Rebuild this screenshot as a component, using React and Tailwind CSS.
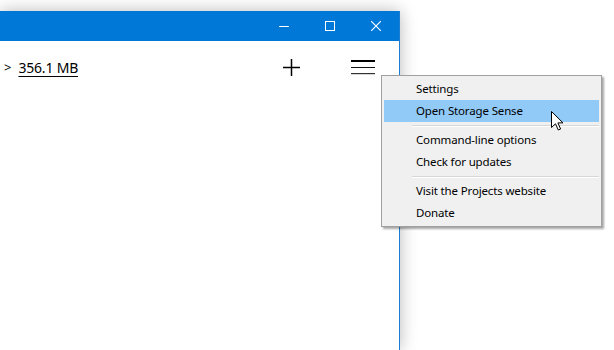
import React from 'react';

const menuGroups = [
    ['Settings', 'Open Storage Sense'],
    ['Command-line options', 'Check for updates'],
    ['Visit the Projects website', 'Donate'],
];

const Cursor = () => (
    <svg width="13" height="20" viewBox="0 0 13 20" className="absolute left-[551px] top-[111px]">
        <path
            d="M0.5 0.5 L0.5 16.5 L4.5 12.8 L7.3 19 L9.6 18 L6.9 11.9 L12 11.9 Z"
            fill="#fff"
            stroke="#000"
            strokeWidth="1"
            strokeLinejoin="miter"
        />
    </svg>
);

const App = () => {
    return (
        <div className="relative w-[614px] h-[350px] overflow-hidden bg-white pt-[11px] font-['Noto_Sans',sans-serif]">
            {/* Window */}
            <div className="w-[400px] h-[339px] flex flex-col bg-white border-r border-[#1a7fd4] shadow-[0_0_16px_rgba(0,0,0,0.28)]">
                <div className="h-[30px] bg-[#0078d7] flex justify-end text-white">
                    <div className="w-[46px] flex items-center justify-center">
                        <div className="w-[10px] h-px bg-white mt-px" />
                    </div>
                    <div className="w-[46px] flex items-center justify-center">
                        <div className="w-[10px] h-[10px] border border-white" />
                    </div>
                    <div className="w-[46px] flex items-center justify-center">
                        <svg width="10" height="10" viewBox="0 0 10 10">
                            <path d="M0 0 L10 10 M10 0 L0 10" stroke="#fff" strokeWidth="1.1" />
                        </svg>
                    </div>
                </div>
                <div className="h-[54px] flex items-center">
                    <span className="text-[13px] text-black ml-[4px]">&gt;</span>
                    <span className="text-[14px] tracking-[-0.2px] text-black underline underline-offset-[3px] ml-[7px] leading-none">356.1 MB</span>
                    <div className="flex-1" />
                    <svg width="17" height="17" viewBox="0 0 17 17" className="mr-[51px] -mt-[2px]">
                        <path d="M8.5 0 V17 M0 8.5 H17" stroke="#000" strokeWidth="1.5" />
                    </svg>
                    <svg width="24" height="16" viewBox="0 0 24 16" className="mr-[24px]">
                        <rect x="0" y="0" width="24" height="2" fill="#000" />
                        <rect x="0" y="7" width="24" height="1" fill="#111" />
                        <rect x="0" y="13" width="24" height="1.2" fill="#333" />
                    </svg>
                </div>
            </div>

            {/* Context menu */}
            <div className="absolute left-[381px] top-[75px] w-[221px] bg-[#f0f0f0] border border-[#a0a0a0] p-[2px] shadow-[2px_2px_2px_rgba(0,0,0,0.35)] text-[11.5px] tracking-[-0.15px] text-black">
                {menuGroups.map((group, gIdx) => (
                    <div key={gIdx}>
                        {gIdx > 0 && (
                            <div className="h-[7px] flex flex-col justify-center ml-[28px]">
                                <div className="h-px bg-[#d7d7d7]" />
                                <div className="h-px bg-white" />
                            </div>
                        )}
                        {group.map((item) => (
                            <div
                                key={item}
                                className={`h-[22px] flex items-center pl-[32px] ${item === 'Open Storage Sense' ? 'bg-[#91c9f7]' : ''}`}
                            >
                                {item}
                            </div>
                        ))}
                    </div>
                ))}
            </div>

            <Cursor />
        </div>
    );
};

export default App;
